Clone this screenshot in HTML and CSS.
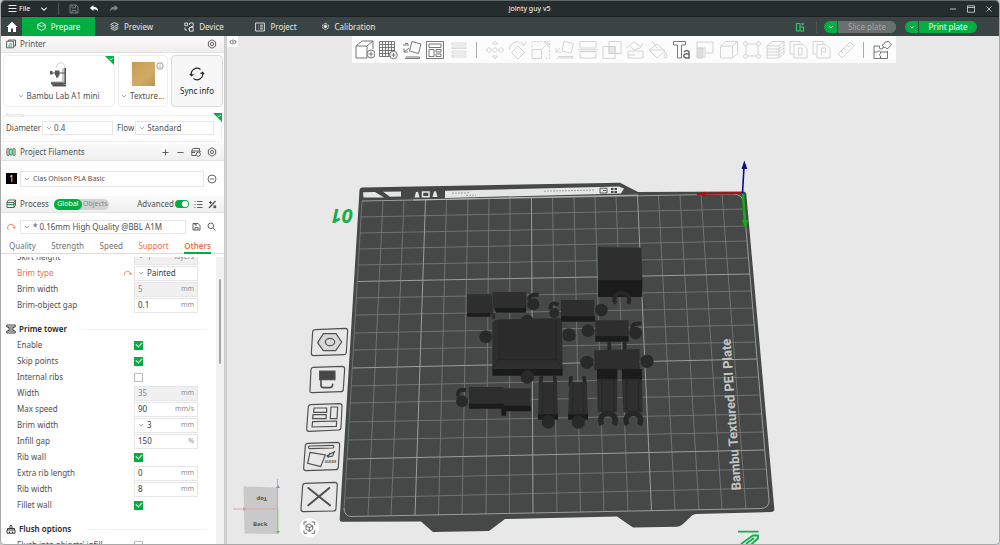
FILE: index.html
```html
<!DOCTYPE html>
<html lang="en">
<head>
<meta charset="utf-8">
<title>jointy guy v5</title>
<link rel="stylesheet" href="styles.css">
</head>
<body>
<svg class="defs" aria-hidden="true">
  <symbol id="chev" viewBox="0 0 6 6"><path d="M1 2l2 2 2-2"/></symbol>
  <symbol id="gear" viewBox="0 0 10 10"><path d="M5 .8l3.6 2.1v4.2L5 9.2 1.4 7.1V2.9z"/><circle cx="5" cy="5" r="1.6"/></symbol>
  <symbol id="reset" viewBox="0 0 10 10"><path d="M2.2 7.6A3.4 3.4 0 1 1 8.4 6M6.8 5.2l1.6 1.2 1.2-1.6"/></symbol>
  <symbol id="tri" viewBox="0 0 9 9"><path d="M0 0h9v9z" fill="#00ae42" stroke="none"/><path d="M4.6 2.6l1.3 1.2L8 1.8" stroke="#fff" stroke-width=".8"/></symbol>
</svg>
<div class="window">
  <header class="titlebar">
    <div class="menu">
      <button class="file"><svg class="i9" viewBox="0 0 9 9"><path d="M.5 1.5h8M.5 4.5h8M.5 7.5h8"/></svg>File</button>
      <button aria-label="Menu"><svg class="i8" viewBox="0 0 6 6"><path d="M1 2l2 2 2-2" stroke-width=".8"/></svg></button>
      <span class="bar"></span>
      <button aria-label="Save" class="dim"><svg class="i10" viewBox="0 0 10 10"><path d="M1 1h6l2 2v6H1zM3 1v3h3.5V1M3 9V6.5h4V9"/></svg></button>
      <button aria-label="Undo"><svg class="i10" viewBox="0 0 10 10"><path d="M.8 4L4.4 1v1.8c3 0 4.8 1.7 4.8 5C8.300 6 7 5.300 4.400 5.300V7z" fill="#fff" stroke="none"/></svg></button>
      <button aria-label="Redo"><svg class="i10" viewBox="0 0 10 10"><path d="M9.200 4L5.600 1v1.800C2.600 2.800.8 4.500.8 7.800 1.700 6 3 5.300 5.600 5.300V7z" fill="#7d8586" stroke="none"/></svg></button>
    </div>
    <div class="title">jointy guy v5</div>
    <div class="controls">
      <button aria-label="Minimize"><svg class="i8" viewBox="0 0 8 8"><path d="M1 4h6"/></svg></button>
      <button aria-label="Maximize"><svg class="i8" viewBox="0 0 8 8"><path d="M.5.8h7v6.400h-7zM.5 2.500h7"/></svg></button>
      <button aria-label="Close"><svg class="i8" viewBox="0 0 8 8"><path d="M1.500 1.500l5 5M6.500 1.500l-5 5"/></svg></button>
    </div>
  </header>
  <nav class="tabs">
    <button class="home" aria-label="Home"><svg class="i12" viewBox="0 0 12 12"><path d="M6 .8L.6 6H2v5h3V7.500h2V11h3V6h1.400z" fill="#fff" stroke="none"/></svg></button>
    <button class="tab on"><svg class="i9" viewBox="0 0 9 9"><path d="M4.500.6l3.700 1.900v4L4.500 8.400.8 6.500v-4zM.8 2.500l3.700 2 3.700-2"/></svg>Prepare</button>
    <button class="tab"><svg class="i9" viewBox="0 0 9 9"><path d="M4.500.6l3.800 1.900-3.800 1.900L.7 2.500zM.7 4.500l3.800 1.900 3.800-1.900M.7 6.400l3.800 1.900 3.800-1.900"/></svg>Preview</button>
    <button class="tab"><svg class="i10" viewBox="0 0 10 10"><path d="M.8 1h2.700v2.700H.8zM5.500 3V1h3.700v3.500H7M1 5.500V8h2M5.500 5.500h3.700v3.700H5.500zM5 7H4"/></svg>Device</button>
    <button class="tab"><svg class="i10" viewBox="0 0 10 10"><path d="M.6 1h8.800v8H.6zM3 3.200h.5M5 3.200h3M3 5h.5M5 5h3M3 6.900h.5M5 6.900h3"/></svg>Project</button>
    <button class="tab"><svg class="i9" viewBox="0 0 9 9"><path d="M4.500 1.300l2.800 1.600v3.200L4.500 7.700 1.700 6.100V2.900z" stroke-dasharray="2.200 .7"/><circle cx="4.500" cy="4.500" r="1.200" fill="#fff"/></svg>Calibration</button>
    <div class="actions">
      <svg class="i10" viewBox="0 0 10 10"><path d="M1.500 1.500h3.500v7.500H1.500zM5 5h3.500v4H5z" stroke="#20d060" stroke-width="1.200"/><path d="M6.500 1h2.300v2.300H6.500z" fill="#a060d0" stroke="none"/></svg>
      <span class="bar"></span>
      <div class="split off"><button aria-label="Slice options"><svg class="i6"><use href="#chev"/></svg></button><button class="main">Slice plate</button></div>
      <div class="split"><button aria-label="Print options"><svg class="i6"><use href="#chev"/></svg></button><button class="main">Print plate</button></div>
    </div>
  </nav>
  <div class="work">
    <aside class="side">
      <div class="head"><svg class="i10" viewBox="0 0 10 10"><path d="M2.500 2V1h7v6H8M.6 2.200h7v6.600h-7z"/><path d="M2 7h4M3 5h3" stroke="#00ae42"/></svg><h2>Printer</h2><button class="end" aria-label="Printer settings"><svg class="i10"><use href="#gear"/></svg></button></div>
      <div class="cards">
        <div class="card printer">
          <svg class="corner"><use href="#tri"/></svg>
          <svg class="pic" viewBox="0 0 22 26"><path d="M8 6C9-1 17-1 17 6" stroke="#bbb" stroke-width=".7"/><path d="M14 6h4v15h-4z" fill="#c9c9c9" stroke="none"/><path d="M16.500 6H18v16h-1.500zM2 10.500h15v1H2zM2 9h2.500v3.500H2zM7 8.500h4.500v5H7zM8 13.500h2.500v2H8z" fill="#555" stroke="none"/><path d="M3 20h11l4 1v1.500H3zM4.500 22.500H14l4 .5v1.500H4.500z" fill="#555" stroke="none"/><path d="M3 19.500h12l1 1H3z" fill="#aaa" stroke="none"/></svg>
          <label class="pick"><svg class="i6"><use href="#chev"/></svg><select aria-label="Printer model"><option>Bambu Lab A1 mini</option></select></label>
        </div>
        <div class="card bed">
          <svg class="info" viewBox="0 0 8 8"><circle cx="4" cy="4" r="3.200"/><path d="M4 3.500v2.300M4 2.200v.6"/></svg>
          <div class="swatch"></div>
          <label class="pick"><svg class="i6"><use href="#chev"/></svg><select aria-label="Plate type"><option>Texture...</option></select></label>
        </div>
        <button class="card sync"><svg viewBox="0 0 16 16"><path d="M2.500 9.500A5.700 5.700 0 0 1 11.500 3.500M13.500 6.500A5.700 5.700 0 0 1 4.500 12.500M.8 7.800l1.700 2 2-1.500M15.200 8.200l-1.700-2-2 1.500"/></svg>Sync info</button>
      </div>
      <fieldset class="nozzle">
        <legend>Nozzle</legend>
        <svg class="corner"><use href="#tri"/></svg>
        <label for="dia">Diameter</label><span class="box dia"><svg class="i6"><use href="#chev"/></svg><select id="dia"><option>0.4</option></select></span>
        <label for="flow">Flow</label><span class="box flow"><svg class="i6"><use href="#chev"/></svg><select id="flow"><option>Standard</option></select></span>
      </fieldset>
      <div class="head"><svg class="i10" viewBox="0 0 10 10"><path d="M1 2c1-1 1.500-1 2 0v6c-.5 1-1 1-2 0zM7 2c.5-1 1-1 2 0v6c-1 1-1.500 1-2 0z"/><path d="M4 2h2v6H4z" stroke="#00ae42"/></svg><h2>Project Filaments</h2>
        <div class="end tools">
          <button aria-label="Add filament"><svg class="i9" viewBox="0 0 9 9"><path d="M4.500 1.500v6M1.500 4.500h6"/></svg></button>
          <button aria-label="Remove filament"><svg class="i9" viewBox="0 0 9 9"><path d="M1.500 4.500h6"/></svg></button>
          <button aria-label="Sync filaments"><svg class="i10" viewBox="0 0 10 10"><path d="M1 4V2.500l1.500-1h6V4M.8 4h8.400v1M.8 4v4.500H5M.8 5.500H4"/><circle cx="7.300" cy="7.200" r="2.100"/></svg></button>
          <button aria-label="Filament settings"><svg class="i10"><use href="#gear"/></svg></button>
        </div></div>
      <div class="filament"><span class="num">1</span><span class="box"><svg class="i6"><use href="#chev"/></svg><select aria-label="Filament"><option>Clas Ohlson PLA Basic</option></select></span><button aria-label="Filament details"><svg class="i10" viewBox="0 0 10 10"><circle cx="5" cy="5" r="4"/><path d="M3 5h4"/></svg></button></div>
      <div class="head"><svg class="i10" viewBox="0 0 10 10"><path d="M2.500 1h7L8 3.500H1zM1 5.500h7l1.500-2M1 8.500h7L9.500 6V1M1 3.500v5M8 3.500v5"/><path d="M2 5.500h5" stroke="#00ae42"/></svg><h2>Process</h2>
        <div class="scope"><button class="on">Global</button><button>Objects</button></div>
        <div class="end adv"><label for="adv">Advanced</label><input type="checkbox" id="adv" class="toggle" checked>
          <button aria-label="Parameter list"><svg class="i9" viewBox="0 0 9 9"><path d="M.5 1.500h1M3 1.500h5.500M.5 4.500h1M3 4.500h5.500M.5 7.500h1M3 7.500h5.500"/></svg></button>
          <button aria-label="Compare presets"><svg class="i9" viewBox="0 0 9 9"><path d="M1 8l6.500-7M1 2.500h3M2.500 1v3M5.500 5.500l2.500 2.500M8 5.500L5.500 8" stroke-width="1.200"/></svg></button></div></div>
      <div class="preset"><button class="warn" aria-label="Reset preset"><svg class="i10"><use href="#reset"/></svg></button><span class="box"><svg class="i6"><use href="#chev"/></svg><select aria-label="Process preset"><option>* 0.16mm High Quality @BBL A1M</option></select></span>
        <button aria-label="Save preset"><svg class="i9" viewBox="0 0 9 9"><path d="M1 1.500h5l2 2V8H1zM3 8V5.500h3V8M3 1.500v1.500h2"/></svg></button>
        <button aria-label="Search"><svg class="i9" viewBox="0 0 9 9"><circle cx="3.800" cy="3.800" r="2.800"/><path d="M6 6l2.500 2.500"/></svg></button></div>
      <div class="cats"><button>Quality</button><button>Strength</button><button>Speed</button><button class="warn">Support</button><button class="warn on">Others</button></div>
      <div class="scroll">
        <div class="list">
          <div class="row"><label for="p1">Skirt height</label><span class="box dis"><svg class="i6"><use href="#chev"/></svg><input id="p1" value="1" disabled><i>layers</i></span></div>
          <div class="row warn"><label for="p2">Brim type</label><button aria-label="Reset brim type"><svg class="i9"><use href="#reset"/></svg></button><span class="box"><svg class="i6"><use href="#chev"/></svg><select id="p2"><option>Painted</option></select></span></div>
          <div class="row"><label for="p3">Brim width</label><span class="box dis"><input id="p3" value="5" disabled><i>mm</i></span></div>
          <div class="row"><label for="p4">Brim-object gap</label><span class="box"><input id="p4" value="0.1"><i>mm</i></span></div>
          <h3><svg class="i10" viewBox="0 0 10 10"><path d="M.8 1h8.400v2H.8zM.8 7h8.400v2H.8zM2 3l1.500 2L2 7M8 3L6.500 5 8 7M3.500 5h3"/></svg>Prime tower</h3>
          <div class="row"><label for="c1">Enable</label><input type="checkbox" id="c1" checked></div>
          <div class="row"><label for="c2">Skip points</label><input type="checkbox" id="c2" checked></div>
          <div class="row"><label for="c3">Internal ribs</label><input type="checkbox" id="c3"></div>
          <div class="row"><label for="p5">Width</label><span class="box dis"><input id="p5" value="35" disabled><i>mm</i></span></div>
          <div class="row"><label for="p6">Max speed</label><span class="box"><input id="p6" value="90"><i>mm/s</i></span></div>
          <div class="row"><label for="p7">Brim width</label><span class="box"><svg class="i6"><use href="#chev"/></svg><input id="p7" value="3"><i>mm</i></span></div>
          <div class="row"><label for="p8">Infill gap</label><span class="box"><input id="p8" value="150"><i>%</i></span></div>
          <div class="row"><label for="c4">Rib wall</label><input type="checkbox" id="c4" checked></div>
          <div class="row"><label for="p9">Extra rib length</label><span class="box"><input id="p9" value="0"><i>mm</i></span></div>
          <div class="row"><label for="p10">Rib width</label><span class="box"><input id="p10" value="8"><i>mm</i></span></div>
          <div class="row"><label for="c5">Fillet wall</label><input type="checkbox" id="c5" checked></div>
          <h3><svg class="i10" viewBox="0 0 10 10"><path d="M1 9.200V6h8v3.200zM1.500 6V4.500h7V6M4 4.500V2.500l1-1.500 1 1.500v2M3.500 9V7.500M6.500 9V7.500"/></svg>Flush options</h3>
          <div class="row"><label for="c6">Flush into objects' infill</label><input type="checkbox" id="c6"></div>
        </div>
        <div class="gutter"><div class="thumb"></div></div>
      </div>
    </aside>
    <main class="view">
      <svg class="scene" viewBox="227 36 772 508">
        <path class="plate" d="M362 187.500L620 182.700L638 192L743 191.500Q746 191.500 746.300 194L774.300 509Q774.500 512 771 512L696 514Q694 514 692 515.500L683 524Q680 526.500 677 526.700L633 527.500L617 516.500L505 519L489 531L433 532L421 521.500L342 521.800Q339.500 521.800 339.700 519L359.500 190Q359.800 187.600 362 187.500Z"/>
        <path class="grid" d="M362 201L344 510M383 201L368 516M404 200L391 516M446.500 199L438.500 515M468 199L462 514M489 198L486 514M510 198L509.500 513M552.500 197L557 512M574 197L580.500 512M595 196L604 512M616 196L628 511M658.500 195L675 510M680 195L699 510M701 194L722 509M722 194L746 509M361 217L745 209M360 233L746 226M359 249L747.500 241M358.500 265L749 258M356.500 298L751.500 291M355.500 315L753 308M354.500 333L754.500 325M353.500 350L756 342M351.500 386L758.500 377M350.500 403L760 395M349.500 422L761.500 414M348.500 440L763 432M346 479L766 469M345 498L768 488"/>
        <path class="grid bold" d="M425.500 200L415 515M531.500 198L533 513M637.500 195L651.500 511M362 201L733 194Q743.500 194 744 205L769 500Q769.500 508 761 508.500L352 516.500Q344 516.500 344 508M357.500 281.500L750 274M352.500 368L757 359M347 459L764.500 450"/>
        <path class="light" d="M363 192.200L375 192L384 197.400L363.500 197.600ZM383 191.800L401 191.400V196.500L390 196.800ZM416 192L418 191.800L419.500 197.500H414.500ZM434 191.500L436 191.300L437.500 197H432.500ZM445 190.700L619 186.500L624 188.500L621 193.500L445 198Z"/>
        <path d="M422.500 192h6.500v4.800h-6.500z" fill="none" stroke="#e8e8e8" stroke-width="1.500"/>
        <path d="M600 188.200h7v4.800h-7zM603 190.500h3" fill="none" stroke="#454847"/>
        <path d="M611 188h2.500v2H611zM614.500 188h2.500v2h-2.500zM611 191h2.500v2H611zM614.500 191h2.500v2h-2.500z" fill="#454847"/>
        <path d="M452 193.200l18-.4M544 191.200l51-1.200M466 195.500l10-.3" stroke="#999" stroke-dasharray="2 1" fill="none"/>
        <path d="M413 200L638 195" stroke="#c0c2c1" fill="none"/>
        <path d="M697 194L743 193" stroke="#b00c10" stroke-width="2.200"/><path d="M696 194.200l9-2.500v4.500z" fill="#b00c10"/>
        <path d="M742.500 193L744 167" stroke="#0a0a90" stroke-width="1.600"/><path d="M744.300 160.500l3 8.500h-5.800z" fill="#0a0a90"/>
        <path d="M743 194L744.800 222" stroke="#0db010" stroke-width="2.400"/><path d="M742 220h6l-2.500 9.500z" fill="#0db010"/>
        <text class="num01" transform="translate(353 209) rotate(180)">01</text>
        <text class="platename" transform="translate(741 490) rotate(-94)">Bambu Textured PEI Plate</text>
        <path d="M738 531.700h20.500M741 544l12-8.500h5v3l-7 6M746 544l8-6" fill="none" stroke="#15ae4c" stroke-width="1.800"/>
        <g class="parts" transform="translate(440 235) scale(.3333)">
          <path class="dark" d="M474 130h133v56H474z"/><path class="mid" d="M474 36l130 2 3 98H474z"/>
          <path class="ring" d="M527 206C516 188 528 174 545 174S574 188 564 206"/>
          <path class="mid" d="M81 178h76l2 58H81zM158 171h101v50H160z"/><path class="dark" d="M81 235h70v10H81zM163 219h95v14h-90z"/><path class="mid" d="M152 233h14v18l-10 2z"/>
          <path class="ring" d="M268 196c0-16 12-18 28-16"/><circle class="ball" cx="280" cy="208" r="18"/>
          <path class="ring" d="M332 222c-2-18 10-20 24-12"/><circle class="ball" cx="343" cy="234" r="15"/><path class="mid" d="M363 195h100v52H363z"/><path class="dark" d="M363 244h102v16H363z"/><circle class="ball" cx="484" cy="225" r="19"/>
          <circle class="ball" cx="444" cy="287" r="19"/><path class="mid" d="M466 256h100v50H466z"/><path class="dark" d="M466 304h100v16H466z"/><path class="ring" d="M576 282c0-16 12-18 28-16"/><circle class="ball" cx="587" cy="294" r="19"/>
          <circle class="ball" cx="137" cy="305" r="19"/><circle class="ball" cx="387" cy="300" r="20"/><circle class="ball" cx="262" cy="258" r="19"/>
          <path class="dark" d="M157 398h211v24H157z"/><path class="mid" d="M157 266q2-10 12-12l188-5q8 2 9 10l2 143H157z"/><path class="face" d="M177 254h172v120H177z"/><path class="edge" d="M177 254v120l-20 26M349 252v122l18 26M177 374h172"/><circle class="ball" cx="262" cy="426" r="20"/>
          <circle class="ball" cx="441" cy="382" r="20"/><circle class="ball" cx="621" cy="379" r="20"/><path class="ring thin" d="M508 344v-18M554 342v-18"/><path class="mid" d="M463 346l136-4v64H463z"/>
          <path class="dark" d="M471 402h61v34h-61zM546 402h60v34h-60z"/><path class="mid" d="M471 432h61l-1 100h-58zM546 432h60l2 100h-58z"/><path class="edge" d="M485 434v96M522 434v96M560 434v96M596 434v96"/>
          <path class="ring wide" d="M486 570c-10-20 0-34 18-34s28 14 18 34M562 570c-10-20 0-34 18-34s28 14 18 34"/>
          <path class="ring thin" d="M301 448l3-20M346 448l-2-20M391 448l2-20M435 448l-3-20"/><path class="mid" d="M297 442h54l3 100h-60zM388 442h52l4 100h-60z"/><path class="dark" d="M294 538h60v16h-60zM384 538h60v16h-60z"/><path class="edge" d="M309 446l-3 94M341 446l2 94M400 446l-3 94M428 446l3 94"/><circle class="ball" cx="325" cy="561" r="20"/><circle class="ball" cx="415" cy="561" r="20"/>
          <path class="ring" d="M54 484c-2-18 8-22 24-18"/><circle class="ball" cx="66" cy="499" r="18"/><path class="mid" d="M87 456h103v52H87zM190 460h82v54h-82z"/><path class="dark" d="M87 506h104v15H87zM198 512h75v17h-75zM184 512h14v30h-14z"/>
        </g>
        <g class="signs" transform="translate(230 320) scale(.3333)">
          <path d="M255 29l91-4q7 0 7 7l-4 66q-1 6-7 6l-91 3q-7 0-7-7l4-64q1-7 7-7zM249 142l88-3q7 0 7 7l-4 62q-1 7-7 7l-87 3q-7 0-6-7l3-62q1-6 6-7zM242 254l87-3q7 0 7 7l-3 65q-1 7-7 7l-89 4q-7 0-7-7l5-66q1-7 7-7zM233 370l89-3q7 0 7 7l-4 68q-1 7-7 7l-90 3q-7 0-7-7l5-68q1-7 7-7zM225 490l90-3q7 0 7 7l-4 72q-1 7-7 7l-90 2q-8 0-8-7l5-71q1-7 7-7z"/>
          <path d="M263 68l17-27h38l17 25-18 26h-37z" fill="#d8d8d8"/><ellipse cx="300" cy="66" rx="14" ry="11"/>
          <path d="M269 153h46v26h-46z" fill="#464646"/><path d="M273 178v18q0 7 8 7h17q10 0 10-10" stroke-width="5"/>
          <path d="M252 264h38v13h-39zM303 261h20l-2 35h-20zM249 284h40l-1 12h-40zM248 305l72-2-1 16-73 2z"/>
          <path d="M238 378l71-2q5 3 0 8l-71 2q-5-4 0-8zM240 397l46 8-14 35-39-10zM291 407l22-12-5 13-14 3zM299 400l-3 10"/>
          <path d="M235 504l65 52M298 504l-63 52" stroke-width="6"/><text x="284" y="430">GUIDE</text>
          <circle class="focus" cx="238" cy="623" r="29"/><path d="M222 614v-8h8M246 606h8v8M254 632v8h-8M230 640h-8v-8M238 612l10 6v10l-10 6-10-6v-10zM228 618l10 5 10-5M238 623v11" stroke-width="2.500"/>
        </g>
        <path d="M243.500 486.500l34 1v46.500l-33-.5z" fill="#c9c9c9"/><path d="M233 509h43" stroke="#e0a0a0" fill="none"/><path d="M277.500 479v54" stroke="#aaa8dc" fill="none"/><path d="M278 510v22" stroke="#8ad08a" fill="none"/><path d="M243 507l4 2-4 2z" fill="#d99"/><path d="M276 488l2-3 2 3z" fill="#88c"/><path d="M276 531l2 3 2-3z" fill="#6b6"/>
        <text class="cube" transform="translate(267 497) rotate(180)">Top</text><text class="cube" x="253" y="526">Back</text>
      </svg>
      <button class="fold" aria-label="Collapse sidebar"><svg class="i8" viewBox="0 0 8 8"><path d="M2.500 2L.8 4l1.700 2M5.500 2l1.700 2-1.700 2M4 1.500v5"/></svg></button>
      <div class="toolbar">
        <button aria-label="Add"><svg viewBox="0 0 20 20"><path d="M1 6h11v12H1zM1 6l6-5h11l-6 5M18 1v8"/><circle cx="16" cy="14" r="4" fill="#fff"/><path d="M16 11.500v5M13.500 14h5"/></svg></button>
        <button aria-label="Add plate"><svg viewBox="0 0 20 20"><path d="M1.500 1.500h15v15h-15zM4.500 1.500v15M7.500 1.500v15M10.500 1.500v15M13.500 1.500v15M1.500 4.500h15M1.500 7.500h15M1.500 10.500h15M1.500 13.500h15"/><circle cx="15.500" cy="15" r="3.800" fill="#fff"/><path d="M15.500 13v4M13.500 15h4"/></svg></button>
        <button aria-label="Orient"><svg viewBox="0 0 20 20"><path d="M10 1.500l9 2.500-2.500 9.500-9-2.500zM3 18.500h14.500V17H4M1 5h6M3 3.500h3M2 12l5-4M2 12V8.500M2 12h4"/></svg></button>
        <button aria-label="Arrange"><svg viewBox="0 0 20 20"><path d="M1.500 1.500h17v17h-17zM4 4h12v3.500H4zM4 9.500h5v7H4zM11 9.500h5v2.500h-5zM11 14h5v2.500h-5z"/></svg></button>
        <button class="off1" aria-label="Variable layer"><svg viewBox="0 0 20 20"><path d="M3 3h14v2H3zM3 7h14v1.500H3zM3 11h14v2H3zM3 15h14v2H3z"/></svg></button>
        <span></span>
        <button class="off2" aria-label="Move"><svg viewBox="0 0 20 20"><path d="M10 1l2.500 3h-5zM10 19l2.500-3h-5zM1 10l3-2.500L7 10l-3 2.500zM19 10l-3-2.500L13 10l3 2.500zM10 7.500l2.500 2.500-2.500 2.500L7.500 10z"/></svg></button>
        <button class="off2" aria-label="Rotate"><svg viewBox="0 0 20 20"><path d="M10 6l6.500 6.500L10 19l-6.500-6.500zM1.500 10C1 1 13-.5 16 5M13 5h3.500l1.500-3.500"/></svg></button>
        <button class="off2" aria-label="Scale"><svg viewBox="0 0 20 20"><path d="M1 9.500h9.500v9H1z"/><path d="M1 7V1.500h17.500v17H13" stroke-dasharray="2 1.500"/><path d="M11 9l6-6M13 3h4v4"/></svg></button>
        <button class="off2" aria-label="Lay on face"><svg viewBox="0 0 20 20"><path d="M9 1.500l9.500 2-2.500 9.500-9-2zM2 18h16v-1.500H3M1 12l4-4M1 12h5M1 12v-4"/></svg></button>
        <button class="off2" aria-label="Cut"><svg viewBox="0 0 20 20"><path d="M2 1.500h16v6.500H2zM2 11.500h16v6.500H2zM0 9.800h20"/></svg></button>
        <button class="off2" aria-label="Boolean"><svg viewBox="0 0 20 20"><path d="M1 6.500h12v12H1zM7 1.500h12v12H7z"/><path d="M7 6.500h6v7H7z" fill="#e5e5e5"/></svg></button>
        <button class="off2" aria-label="Support paint"><svg viewBox="0 0 20 20"><path d="M3 11h15v7H3zM3 15h7M1 8l8-6 7 5M5 6l4 4 6-2 3-5"/></svg></button>
        <button class="off2" aria-label="Color paint"><svg viewBox="0 0 20 20"><path d="M9 4l8 7-8 7-8-8zM2 10h14M4 1l5 7M17.500 12q-3 6 0 6t0-6"/></svg></button>
        <button aria-label="Text"><svg viewBox="0 0 20 20"><path d="M1.500 1.500h12V5H9.500v13h-4V5h-4z"/><path d="M12 12q3-3 5 0v6h-3q-3-1-2-3t5-1" stroke-width="1.500"/></svg></button>
        <button class="off2" aria-label="Emboss"><svg viewBox="0 0 20 20"><path d="M2 2h16v11h-8V8H2zM10 13v5"/><path d="M2 8h6v10H2z" fill="#ddd"/></svg></button>
        <button class="off2" aria-label="Measure"><svg viewBox="0 0 20 20"><path d="M1.500 6h12v12h-12zM1.500 6l5-4.500h12l-5 4.500M18.500 1.500v12l-5 4.500"/></svg></button>
        <button class="off2" aria-label="Simplify"><svg viewBox="0 0 20 20"><path d="M5 4h10M5 16h10M4 5v10M16 5v10"/><circle cx="3.500" cy="3.500" r="2"/><circle cx="16.500" cy="3.500" r="2"/><circle cx="3.500" cy="16.500" r="2"/><circle cx="16.500" cy="16.500" r="2"/></svg></button>
        <button class="off2" aria-label="Layers"><svg viewBox="0 0 20 20"><path d="M1 6h12v12H1zM1 6l5-4.500h12L13 6M18 1.500v12L13 18M1 9h12l5-4M1 12h12l5-4M1 15h12l5-4"/></svg></button>
        <button class="off2" aria-label="Object list"><svg viewBox="0 0 20 20"><path d="M4 14H1V1.500h10V4M5 4.500h9l4 4V18H5zM9.500 8h3.500v7H9.500z"/></svg></button>
        <button class="off2" aria-label="Parts list"><svg viewBox="0 0 20 20"><path d="M4 14H1V1.500h10V4M5 4.500h9l4 4V18H5zM9.500 15V8h4v4h-4"/></svg></button>
        <button class="off2" aria-label="Ruler"><svg viewBox="0 0 20 20"><path d="M2 14L14 2l4 4L6 18zM5 11l2 2M8 8l2 2M11 5l2 2"/></svg></button>
        <span></span>
        <button aria-label="Assembly"><svg viewBox="0 0 20 20"><path d="M2 6h5.500q-1 3 1.500 3t2-2M2 6v12.500h13.500V11M2 12h3.500q1.500-3 3 0H15.500M8.500 18.500v-2.500q-2.500-1 0-2.500V12M10 5.500l2.500-2q0-2.500 2.500-1.500l1-1 3.500 4-4.500 4-1.500-1.500q-2.500.5-2-1z"/></svg></button>
      </div>
    </main>
  </div>
</div>
</body>
</html>
```
FILE: styles.css
```css
* { box-sizing: border-box; }
html, body { height: 100%; }
body { margin: 0; background: #c4c8c8; font-family: "Noto Sans", sans-serif; font-size: 8px; line-height: 12px; color: #505050; overflow: hidden; }
button, select, input { font: inherit; color: inherit; background: none; border: 0; margin: 0; padding: 0; outline: 0; min-width: 0; }
button { display: flex; align-items: center; justify-content: center; flex: none; }
select { appearance: none; flex: 1; opacity: 1; }
h2, h3 { font-size: 8px; margin: 0; font-weight: 400; }
svg { fill: none; stroke: currentColor; stroke-width: .9; flex: none; display: block; }
.defs { position: absolute; width: 0; height: 0; }
.i6 { width: 6px; height: 6px; color: #a6a6a6; }
.i8 { width: 8px; height: 8px; }
.i9 { width: 9px; height: 9px; }
.i10 { width: 10px; height: 10px; }
.i12 { width: 12px; height: 12px; }
.warn { color: #f0714a; }

.window { height: 100vh; display: flex; flex-direction: column; border: 1px solid #a8a8a8; border-top-color: #5c6968; border-radius: 5px; overflow: hidden; }
.titlebar { height: 16px; flex: none; display: flex; align-items: center; background: #262d2f; color: #fff; font-size: 7px; border-bottom: 1px solid #1b2223; }
.menu { display: flex; align-items: center; padding-left: 7px; gap: 10px; }
.file { gap: 2px; font-size: 7px; }
.bar { width: 1px; height: 12px; background: #4c5557; }
.dim { color: #7d8586; }
.title { margin: 0 auto; }
.controls { display: flex; gap: 10px; padding: 0 6px 0 9px; color: #c4c8c8; }

.tabs { height: 19px; flex: none; display: flex; background: #3b4445; color: #e4e6e6; }
.home { width: 21px; }
.tab { width: 73px; gap: 5px; }
.tab:nth-child(n+4) { width: 72px; }
.tab.on { background: #00ae42; color: #fff; }
.actions { margin-left: auto; display: flex; align-items: center; padding-right: 22px; gap: 9px; }
.actions .bar { margin: 0 -2px 0 2px; }
.split { display: flex; height: 12px; width: 72px; border-radius: 6px; overflow: hidden; background: #00ae42; color: #fff; }
.split button { width: 13px; }
.split .i6 { color: #fff; }
.split .main { flex: 1; border-left: 1px solid #3b4445; }
.split.off .main { background: #6b6f70; color: #a2a5a6; }

.work { flex: 1; min-height: 0; display: flex; }
.side { width: 226px; flex: none; display: flex; flex-direction: column; background: #fff; border-right: 3px solid #cfcfcf; }
.head { height: 17px; flex: none; display: flex; align-items: center; padding: 0 7px 0 5px; gap: 4px; background: linear-gradient(#fafafa, #efefef); border-bottom: 1px solid #e2e2e2; }
.end { margin-left: auto; }
.tools { display: flex; gap: 6px; }
.cards { display: flex; gap: 3px; padding: 2px 1px 0 2px; height: 54px; flex: none; }
.card { position: relative; border: 1px solid #efefef; border-radius: 4px; display: flex; flex-direction: column; align-items: center; justify-content: flex-end; padding-bottom: 4px; gap: 2px; }
.printer { flex: 1; }
.bed { width: 50px; }
.corner { position: absolute; top: 0; right: 0; width: 9px; height: 9px; }
.pic { width: 22px; height: 26px; }
.pick { display: flex; align-items: center; gap: 3px; }
.info { position: absolute; top: 6px; right: 3px; width: 8px; height: 8px; stroke-width: .6; }
.swatch { width: 23px; height: 24px; margin-bottom: 2px; background: linear-gradient(135deg, #c69c55, #d1ab66 60%, #bd9450); }
.sync { width: 52px; background: #f7f7f7; border-color: #dadada; color: #262626; justify-content: center; gap: 3px; padding: 0; }
.sync svg { width: 16px; height: 16px; stroke-width: 1.200; }
.nozzle { position: relative; margin: 4px 2px 2px; border: 1px solid #f0f0f0; height: 31px; flex: none; padding: 2px 7px 0 2px; display: flex; align-items: center; gap: 1px; min-width: 0; }
.nozzle legend { font-size: 6px; line-height: 8px; color: #d4d4d4; padding: 0; }
.nozzle .corner { top: -6px; right: -1px; }
.box { height: 14px; display: flex; align-items: center; border: 1px solid #e6e6e6; background: #fff; padding: 0 3px; gap: 2px; }
.box i { font-style: normal; font-size: 7px; color: #8c8c8c; margin-left: auto; }
.box input { width: 20px; flex: 1; }
.dia { width: 71px; margin-right: 3px; }
.flow { flex: 1; }
.filament { height: 35px; flex: none; display: flex; align-items: center; padding: 0 7px 0 5px; gap: 3px; font-size: 7px; }
.filament .box { flex: 1; height: 16px; gap: 3px; }
.num { width: 11px; height: 11px; background: #000; color: #fff; text-align: center; line-height: 11px; font-size: 8px; }
.scope { display: flex; background: #d2d2d2; border-radius: 6px; margin-left: 1px; font-size: 7px; color: #8a8a8a; height: 11px; }
.scope button { width: 27px; border-radius: 6px; }
.scope .on { background: #00ae42; color: #fff; width: 28px; }
.adv { display: flex; align-items: center; gap: 1px; }
.adv button { margin-left: 4px; }
.toggle { appearance: none; width: 14px; height: 8px; border-radius: 4px; background: radial-gradient(circle at 10px 4px, #fff 3px, #00ae42 3px); }
.preset { height: 26px; flex: none; display: flex; align-items: center; padding: 1px 8px 0 5px; gap: 4px; }
.preset .box { width: 166px; gap: 3px; flex: none; }
.preset button:nth-of-type(2) { margin-left: 2px; }
.preset button:last-child { margin-left: auto; }
.cats { height: 15px; flex: none; display: flex; justify-content: space-between; border-bottom: 1px solid #dcdcdc; padding: 0 13px 0 8px; color: #707070; }
.cats .warn { color: #f0714a; }
.cats .on { font-weight: 600; border-bottom: 2px solid #00ae42; margin-bottom: -1px; }
.scroll { flex: 1; min-height: 0; margin-top: 3px; display: flex; overflow: hidden; }
.list { flex: 1; margin-top: -8px; }
.row { height: 16px; display: flex; align-items: center; padding-left: 16px; }
.row label { width: 117px; }
.row button { width: 9px; margin: 0 2px 0 -11px; }
.row .box { width: 64px; height: 15px; gap: 3px; }
.row select, .row input { color: #3a3a3a; }
.row .box.dis { background: #f0f0f0; }
.row .dis input { color: #8a8a8a; }
.row input[type="checkbox"] { appearance: none; width: 9px; height: 9px; border: 1px solid #bdbdbd; display: grid; place-items: center; }
.row input[type="checkbox"]:checked { background: #00ae42; border-color: #00ae42; }
.row input[type="checkbox"]:checked::after { content: ""; width: 5px; height: 3px; border: solid #fff; border-width: 0 0 1px 1px; transform: translateY(-1px) rotate(-45deg); }
h3 { height: 24px; padding: 8px 10px 0 5px; display: flex; align-items: center; gap: 3px; font-weight: 600; color: #262626; }
h3::after { content: ""; flex: 1; height: 1px; margin-left: 12px; background: #f0f0f0; }
.gutter { width: 8px; background: #f2f2f2; padding: 22px 3px 0; }
.thumb { width: 2px; height: 85px; background: #a6a6a6; border-radius: 1px; }

.view { flex: 1; min-width: 0; position: relative; background: #e8e8e8; }
.scene { width: 100%; height: 100%; stroke: none; }
.plate { fill: #454847; }
.grid { fill: none; stroke: #7a7d7c; stroke-width: .8; }
.grid.bold { stroke: #9a9d9c; stroke-width: 1; }
.light { fill: #e4e5e5; }
.num01 { font: italic 700 20px "Noto Sans", sans-serif; fill: #15ae4c; }
.platename { font: 700 13px Roboto, sans-serif; fill: #c3c5c4; }
.mid { fill: #2e2e2e; }
.dark { fill: #1b1b1b; }
.face { fill: #2b2b2b; }
.edge { fill: none; stroke: #262626; stroke-width: 3; }
.ball { fill: #292929; }
.ring { fill: none; stroke: #272727; stroke-width: 12; }
.ring.thin { stroke-width: 11; stroke-linecap: round; }
.ring.wide { stroke-width: 16; }
.signs { fill: none; stroke: #505050; stroke-width: 3.500; stroke-linecap: round; }
.signs text { font: 700 11px "Noto Sans", sans-serif; fill: #505050; stroke: none; }
.focus { fill: #fff; stroke: none; }
.cube { font: 700 6px "Noto Sans", sans-serif; fill: #555; }
.fold { position: absolute; left: 0; top: 0; width: 11px; height: 11px; background: #fff; }
.toolbar { position: absolute; left: 125px; right: 103px; top: 0; height: 27px; padding: 0 4px 0 3px; display: flex; align-items: center; justify-content: space-between; background: #fcfcfc; color: #6a6a6a; }
.toolbar svg { width: 20px; height: 20px; }
.toolbar button.off1 { color: #d6d6d6; }
.toolbar button.off2 { color: #cfcfcf; }
.toolbar span { width: 9px; height: 16px; background: linear-gradient(#aaa, #aaa) center / 1px 100% no-repeat; }
```
